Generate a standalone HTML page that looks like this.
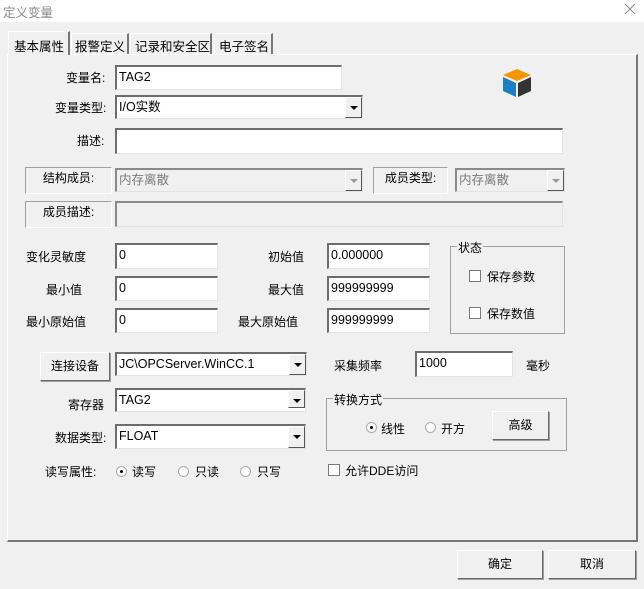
<!DOCTYPE html><html><head><meta charset="utf-8"><style>
*{box-sizing:border-box;margin:0;padding:0}
body{width:644px;height:589px;background:#f0f0f0;position:relative;overflow:hidden;font:12px "Liberation Sans","Noto Sans CJK SC",sans-serif;color:#000}
.a{position:absolute;white-space:nowrap}
.in{position:absolute;background:#fff;border-top:2px solid #6d6d6d;border-left:2px solid #6d6d6d;border-right:1px solid #e3e3e3;border-bottom:1px solid #e3e3e3;padding:0 0 0 2px;line-height:20px;font-size:12.5px}
.dis{background:#f0f0f0;color:#7a7a7a;border-top:2px solid #8a8a8a;border-left:2px solid #8a8a8a}
.db{position:absolute;right:0;top:0;bottom:0;width:17px;background:#f0f0f0;border-left:1px solid #fff;border-top:1px solid #fff;border-right:1px solid #555;border-bottom:1px solid #555}
.db:after{content:"";position:absolute;left:4px;top:8px;border-left:4px solid transparent;border-right:4px solid transparent;border-top:4px solid #000}
.dis .db:after{border-top-color:#999}
.btn{position:absolute;background:#f0f0f0;border:1px solid #fff;border-right-color:#696969;border-bottom-color:#696969;box-shadow:1px 1px 0 #a0a0a0;text-align:center}
.gb{position:absolute;border:1px solid #a0a0a0}
.lb{position:absolute;border:1px solid #a0a0a0;border-right-color:#fff;border-bottom-color:#fff;text-align:center}
.cb{position:absolute;width:12px;height:12px;background:#fff;border:1px solid #7a7a7a}
.rd{position:absolute;width:11px;height:11px;border-radius:50%;background:#fff;border:1px solid #aaa}
.rd.on:after{content:"";position:absolute;left:3px;top:3px;width:3px;height:3px;border-radius:50%;background:#000}
</style></head><body>
<div class="a" style="left:0;top:0;width:644px;height:22px;background:#fff"></div>
<div class="a" style="left:3px;top:2px;color:#8a8a8a;font-size:12.5px">定义变量</div>
<svg class="a" style="left:624px;top:3px" width="12" height="12"><path d="M1 1L11 11M11 1L1 11" stroke="#888" stroke-width="1"/></svg>
<div class="a" style="left:7px;top:54px;width:631px;height:488px;border:1px solid #fff;border-right:2px solid #777;border-bottom:2px solid #777"></div>
<div class="a" style="left:8px;top:31px;width:62px;height:24px;background:#f0f0f0;border:1px solid #fff;border-right:2px solid #777;border-bottom:none;padding:4px 0 0 5px;font-size:12.5px">基本属性</div>
<div class="a" style="left:71px;top:33px;width:58px;height:21px;border:1px solid #fff;border-right:2px solid #777;border-bottom:none;padding:2px 0 0 3px;font-size:12.5px">报警定义</div>
<div class="a" style="left:130px;top:33px;width:82px;height:21px;border:1px solid #fff;border-right:2px solid #777;border-bottom:none;padding:2px 0 0 4px;font-size:12.5px">记录和安全区</div>
<div class="a" style="left:214px;top:33px;width:59px;height:21px;border:1px solid #fff;border-right:2px solid #777;border-bottom:none;padding:2px 0 0 4px;font-size:12.5px">电子签名</div>

<div class="a" style="left:66px;top:69px">变量名:</div>
<div class="in" style="left:115px;top:65px;width:227px;height:25px">TAG2</div>
<svg class="a" style="left:502px;top:68px" width="31" height="30" viewBox="0 0 31 30"><polygon points="15,1 29,7 15,13 1,7" fill="#f39800"/><polygon points="1,9 14,15 14,29 1,23" fill="#1b7fc4"/><polygon points="16,15 29,9 29,23 16,29" fill="#333"/></svg>
<div class="a" style="left:55px;top:99px">变量类型:</div>
<div class="in" style="left:115px;top:95px;width:248px;height:24px">I/O实数<span class="db"></span></div>
<div class="a" style="left:77px;top:132px">描述:</div>
<div class="in" style="left:115px;top:128px;width:448px;height:26px"></div>

<div class="lb" style="left:25px;top:167px;width:87px;height:27px;line-height:20px">结构成员:</div>
<div class="in dis" style="left:115px;top:168px;width:248px;height:24px">内存离散<span class="db"></span></div>
<div class="lb" style="left:373px;top:167px;width:75px;height:27px;line-height:20px">成员类型:</div>
<div class="in dis" style="left:455px;top:168px;width:110px;height:24px">内存离散<span class="db"></span></div>
<div class="lb" style="left:25px;top:201px;width:87px;height:27px;line-height:20px">成员描述:</div>
<div class="in dis" style="left:115px;top:201px;width:448px;height:26px"></div>

<div class="a" style="left:26px;top:248px">变化灵敏度</div>
<div class="in" style="left:115px;top:243px;width:103px;height:26px">0</div>
<div class="a" style="left:46px;top:281px">最小值</div>
<div class="in" style="left:115px;top:276px;width:103px;height:25px">0</div>
<div class="a" style="left:26px;top:313px">最小原始值</div>
<div class="in" style="left:115px;top:308px;width:103px;height:25px">0</div>
<div class="a" style="left:268px;top:248px">初始值</div>
<div class="in" style="left:327px;top:243px;width:103px;height:26px">0.000000</div>
<div class="a" style="left:268px;top:281px">最大值</div>
<div class="in" style="left:327px;top:276px;width:103px;height:25px">999999999</div>
<div class="a" style="left:238px;top:313px">最大原始值</div>
<div class="in" style="left:327px;top:308px;width:103px;height:25px">999999999</div>

<div class="gb" style="left:450px;top:246px;width:115px;height:88px"></div>
<div class="a" style="left:457px;top:239px;background:#f0f0f0;padding:0 1px">状态</div>
<div class="cb" style="left:469px;top:270px"></div><div class="a" style="left:487px;top:268px">保存参数</div>
<div class="cb" style="left:469px;top:307px"></div><div class="a" style="left:487px;top:305px">保存数值</div>

<div class="btn" style="left:40px;top:352px;width:70px;height:29px;line-height:27px">连接设备</div>
<div class="in" style="left:115px;top:352px;width:192px;height:24px">JC\OPCServer.WinCC.1<span class="db"></span></div>
<div class="a" style="left:334px;top:357px">采集频率</div>
<div class="in" style="left:415px;top:351px;width:98px;height:26px">1000</div>
<div class="a" style="left:526px;top:357px">毫秒</div>

<div class="a" style="left:68px;top:396px">寄存器</div>
<div class="in" style="left:115px;top:388px;width:191px;height:24px">TAG2<span class="db" style="bottom:3px"></span></div>
<div class="a" style="left:55px;top:429px">数据类型:</div>
<div class="in" style="left:115px;top:424px;width:191px;height:25px">FLOAT<span class="db"></span></div>

<div class="gb" style="left:326px;top:398px;width:241px;height:53px"></div>
<div class="a" style="left:333px;top:391px;background:#f0f0f0;padding:0 1px">转换方式</div>
<div class="rd on" style="left:366px;top:422px"></div><div class="a" style="left:381px;top:420px">线性</div>
<div class="rd" style="left:425px;top:422px"></div><div class="a" style="left:441px;top:420px">开方</div>
<div class="btn" style="left:492px;top:411px;width:57px;height:29px;line-height:27px">高级</div>

<div class="a" style="left:45px;top:463px">读写属性:</div>
<div class="rd on" style="left:116px;top:466px"></div><div class="a" style="left:132px;top:463px">读写</div>
<div class="rd" style="left:178px;top:466px"></div><div class="a" style="left:195px;top:463px">只读</div>
<div class="rd" style="left:240px;top:466px"></div><div class="a" style="left:257px;top:463px">只写</div>
<div class="cb" style="left:328px;top:464px"></div><div class="a" style="left:345px;top:462px">允许DDE访问</div>

<div class="btn" style="left:457px;top:550px;width:86px;height:29px;line-height:27px">确定</div>
<div class="btn" style="left:548px;top:550px;width:88px;height:29px;line-height:27px">取消</div>
</body></html>
